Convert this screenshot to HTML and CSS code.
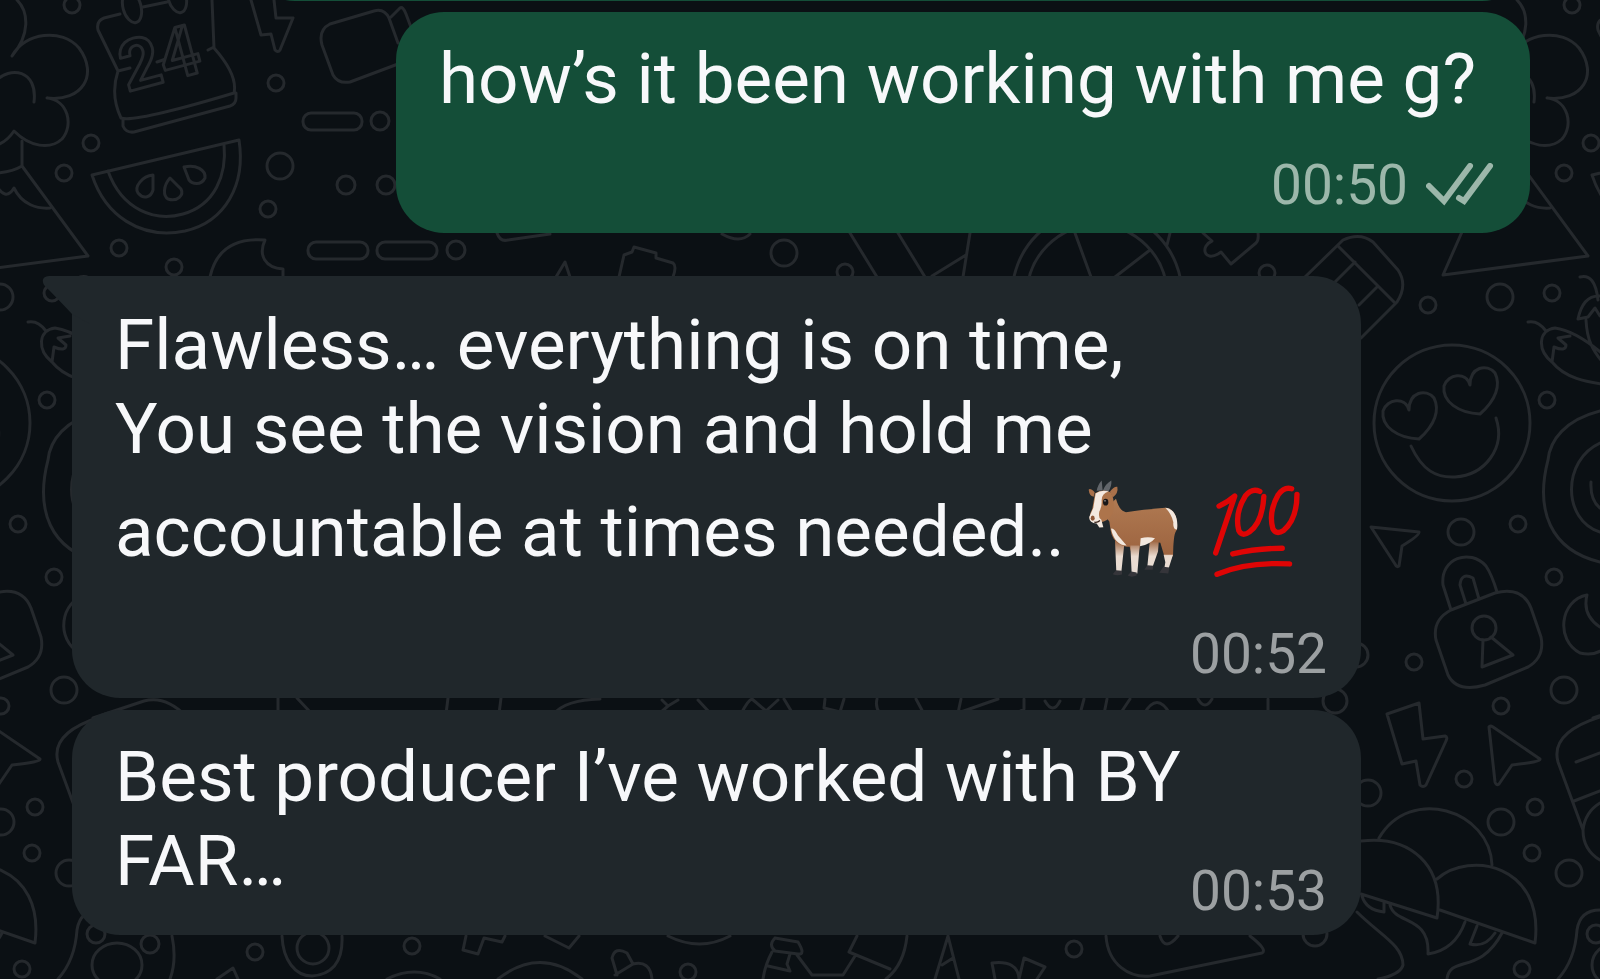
FILE: index.html
```html
<!DOCTYPE html>
<html lang="en">
<head>
<meta charset="utf-8">
<meta name="viewport" content="width=device-width, initial-scale=1">
<title>Chat</title>
<link rel="stylesheet" href="styles.css">
</head>
<body>
<svg class="wallpaper" viewBox="0 0 1600 979" preserveAspectRatio="xMidYMin slice" aria-hidden="true">
  <defs>
    <g id="tile">
      <!-- tree and sail -->
      <path d="M17 0C29 12 30 35 12 56C25 32 62 28 79 48C99 75 82 102 47 98C68 100 74 125 62 139C50 150 30 147 14 131C8 140 0 145-8 146M-5 82C10 65 38 70 34 102"/>
      <path d="M22 141V166C12 172 0 173-8 173M22 166L88 256L-57 275L-35 225M-4 185C2 195 8 198 14 188C22 205 38 209 50 208"/>
      <!-- calendar -->
      <path d="M120 14L104 18Q96 21 98 30L118 71Q110 95 121 118Q134 123 234 93Q238 75 214 48L212 0M123 120V126Q126 133 134 132L230 106Q236 104 236 98V93M118 71L130 68M157 62L166 59M208 50L214 47M143 7L167 2"/>
      <ellipse cx="132" cy="7" rx="9" ry="16" transform="rotate(-15 132 7)"/>
      <ellipse cx="177" cy="-3" rx="9" ry="16" transform="rotate(-15 177 -3)"/>
      <text class="date" x="127" y="92" transform="rotate(-15 127 92)">24</text>
      <!-- melon slice -->
      <path d="M92 175L239 140C246 185 225 222 185 231C140 240 105 215 92 175ZM108 171C122 210 155 222 183 214C215 205 227 175 224 144"/>
      <path d="M153 175C142 176 134 187 138 193C144 200 151 197 153 190ZM170 178C163 186 163 196 168 199C178 202 184 195 181 189ZM184 167C196 164 206 170 205 178C201 186 192 184 189 180Z"/>
      <path d="M251 0L261 35L271 34L275 50Q278 53 280 50L293 18L276 18L274 0M330 24L374 11Q384 8 389 18L398 43M398 64L350 82Q338 84 333 75L322 45Q318 30 330 24M391 17L400 8Q403 6 406 14L412 30"/>
      <rect x="303" y="113" width="59" height="17" rx="8"/>
      <rect x="308" y="242" width="60" height="17" rx="8"/>
      <rect x="377" y="242" width="60" height="17" rx="8"/>
      <path d="M210 277C217 245 240 238 265 240C258 255 265 268 283 269V277"/>
      <!-- row between the first two messages -->
      <path d="M497 233Q500 242 508 240L550 234M556 277L565 262L570 277M619 277L624 255L632 252L634 247L656 253V258L673 263Q677 266 673 277M722 234Q740 244 750 234M850 233L877 277M898 233L925 277M970 233L963 277M966 255L932 276"/>
      <circle cx="1097" cy="295" r="85"/><circle cx="1097" cy="295" r="70"/>
      <path d="M1075 233L1091 277M1150 250L1115 277M1170 233L1167 245M1203 233L1212 241C1200 246 1204 262 1218 254L1221 252L1231 264L1256 243Q1259 240 1258 233M1305 277L1343 240Q1360 232 1373 242L1398 270Q1408 285 1397 302L1361 338M1338 246L1395 303M1355 262L1335 282M1378 286L1359 305"/>
      <!-- chillies -->
      <path d="M1528 322Q1538 320 1546 331M1552 362C1537 350 1538 330 1555 328C1570 330 1590 340 1620 370M1552 362C1565 378 1585 382 1610 385M1552 362L1554 347Q1566 352 1566 345L1558 338L1570 336M1580 277Q1595 273 1598 300M1578 319Q1583 295 1600 296M1578 319L1588 317L1595 308L1600 316M1586 320C1587 340 1592 350 1605 365"/>
      <!-- smiley -->
      <circle cx="1452" cy="423" r="78"/>
      <path id="heart" d="M1409 410C1405 396 1387 399 1383 411C1381 427 1398 438 1419 439C1435 425 1440 410 1434 398C1426 388 1409 392 1409 410Z"/>
      <use href="#heart" x="61" y="-25"/>
      <path d="M1411 446C1422 470 1436 478 1455 477C1485 475 1506 448 1496 418"/>
      <path d="M1371 527L1419 532Q1420 535 1402 546L1399 566Q1397 568 1395 564Z"/>
      <!-- padlock -->
      <path d="M1451 610L1443 585C1440 558 1470 548 1486 566Q1492 575 1497 592M1466 604L1460 585Q1461 572 1473 578L1479 599M1451 610L1495 593Q1522 586 1531 608L1541 637Q1545 657 1528 667L1485 685Q1457 693 1448 675L1436 640Q1432 620 1451 610M1483 640L1482 667L1513 655L1491 637"/>
      <circle cx="1484" cy="628" r="12"/>
      <path d="M1587 595C1560 600 1555 640 1580 653Q1600 658 1612 640M1587 595Q1582 615 1600 627"/>
      <path d="M1600 411C1565 420 1550 440 1548 460C1535 510 1550 550 1600 562M1600 443C1562 460 1562 520 1600 532M1591 482Q1590 500 1600 508"/>
      <path d="M1387 714L1419 703L1423 739L1445 736Q1448 737 1446 741L1426 785Q1423 788 1420 785L1416 761L1402 764ZM1489 727Q1490 725 1493 727L1540 759Q1541 762 1512 765L1499 784Q1496 786 1495 782Z"/>
      <!-- umbrellas -->
      <path d="M1379 838C1410 785 1490 810 1492 865M1361 841C1410 835 1445 865 1437 918L1361 894M1437 879C1470 850 1545 865 1535 943L1440 910M1362 896Q1366 910 1384 912V903M1390 905C1395 925 1430 915 1428 954Q1455 950 1465 922M1477 926L1470 944Q1485 948 1495 933M1502 933C1480 975 1450 955 1447 979M1357 912C1380 935 1403 945 1403 965Q1400 975 1378 979"/>
      <path d="M1600 717Q1550 733 1558 762L1583 830Q1583 850 1600 860M1600 753L1576 762M1600 791L1574 801M1600 803Q1585 812 1583 830M1600 910Q1580 910 1577 930Q1575 960 1558 979"/>
      <!-- row between the last two messages -->
      <path d="M93 718L144 701Q165 695 186 716M278 698V714M297 698L312 714M448 698L446 714M501 698L499 714M554 714Q565 700 600 699M662 700L668 706L678 700M668 706L660 713M698 700L711 714M741 714Q748 700 752 699L766 711L778 700M784 699L793 714M825 699L824 708L840 712L844 699M877 699Q875 707 880 714M916 699L924 714M961 699L958 713L998 699M1024 699V709L1015 714M1045 701Q1053 715 1060 701M1084 699L1080 714M1107 699L1104 714M1130 699L1120 714M1144 714Q1157 691 1170 714M1198 699Q1205 711 1212 699M1268 699V714"/>
      <!-- bottom row -->
      <ellipse cx="117" cy="965" rx="25" ry="22"/>
      <circle cx="313" cy="948" r="16"/>
      <path d="M172 936Q177 960 170 979M217 979L233 968L238 979M282 936C283 960 295 976 312 976C335 974 343 958 342 936M387 979Q415 965 440 979M466 936L463 950L478 954L484 938L502 942L505 936M545 936L569 948L579 936M498 979Q540 946 582 979M617 975L612 958Q615 946 627 953L633 964Q650 960 652 979M633 964L615 975M668 936Q700 952 730 936"/>
      <path d="M775 938L798 942Q806 955 798 954L775 951Q768 945 775 938M772 952Q765 965 763 979M790 954L787 964L790 971L768 966M797 955L812 975H843L855 956M857 936L849 952L890 969M907 936Q904 965 886 979M948 936L935 979M948 936L959 979M953 958L942 965M995 979L992 963Q1018 960 1019 979L1024 958L1045 967L1037 979M1106 936C1108 965 1130 978 1150 976L1262 953Q1268 950 1250 936M1160 936Q1165 952 1178 936"/>
      <!-- dots -->
      <g id="dots">
        <circle cx="72" cy="5" r="8"/><circle cx="91" cy="143" r="8"/><circle cx="64" cy="173" r="8"/><circle cx="119" cy="248" r="8"/><circle cx="174" cy="267" r="8"/><circle cx="276" cy="83" r="8"/><circle cx="280" cy="166" r="13"/><circle cx="268" cy="209" r="8"/><circle cx="380" cy="121" r="9"/><circle cx="346" cy="185" r="9"/><circle cx="386" cy="185" r="9"/><circle cx="456" cy="250" r="9"/><circle cx="784" cy="253" r="13"/><circle cx="845" cy="272" r="8"/><circle cx="1267" cy="273" r="8"/>
        <circle cx="1500" cy="297" r="13"/><circle cx="1552" cy="293" r="8"/><circle cx="1428" cy="305" r="8"/><circle cx="1547" cy="400" r="8"/><circle cx="1461" cy="532" r="13"/><circle cx="1518" cy="524" r="8"/><circle cx="1554" cy="577" r="8"/><circle cx="1414" cy="662" r="8"/><circle cx="1501" cy="706" r="8"/><circle cx="1564" cy="690" r="13"/><circle cx="1464" cy="779" r="8"/><circle cx="1368" cy="793" r="13"/><circle cx="1501" cy="822" r="13"/><circle cx="1535" cy="807" r="8"/><circle cx="1532" cy="853" r="8"/><circle cx="1569" cy="873" r="13"/><circle cx="1522" cy="969" r="8"/>
        <circle cx="96" cy="934" r="9"/><circle cx="150" cy="944" r="9"/><circle cx="255" cy="952" r="8"/><circle cx="412" cy="946" r="8"/><circle cx="688" cy="972" r="8"/><circle cx="1074" cy="949" r="8"/><circle cx="1315" cy="934" r="12"/><circle cx="1356" cy="655" r="12"/><circle cx="1335" cy="701" r="12"/>
      </g>
    </g>
  </defs>
  <use href="#tile"/>
  <use href="#tile" x="-1500"/>
  <use href="#tile" x="1500"/>
</svg>

<main class="chat">
  <div class="bubble sent earlier"></div>

  <article class="bubble sent">
    <p class="text">how’s it been working with me g?</p>
    <footer class="meta">
      <time>00:50</time>
      <svg class="ticks" viewBox="0 0 68 44" role="img" aria-label="Delivered"><path d="M3 23L18 38L44 3M33 35L38 38L64 3"/></svg>
    </footer>
  </article>

  <article class="bubble received tailed">
    <svg class="tail" viewBox="0 0 48 48" aria-hidden="true"><path d="M48 0H7Q-2 1 2 9Q14 21 30 38L48 48Z"/></svg>
    <p class="text">Flawless… everything is on time,<br>You see the vision and hold me accountable at times needed..
      <svg class="emoji goat" viewBox="80 55 288 305" role="img" aria-label="Goat">
        <defs>
          <linearGradient id="coat" x1="0" x2="0" y1="0" y2="1"><stop offset="0" stop-color="#b07a52"/><stop offset="1" stop-color="#9c633f"/></linearGradient>
          <linearGradient id="leg" gradientUnits="userSpaceOnUse" x1="0" x2="0" y1="245" y2="340"><stop offset="0" stop-color="#9c6440"/><stop offset=".5" stop-color="#eadbd0"/><stop offset="1" stop-color="#e8ddd4"/></linearGradient>
        </defs>
        <path fill="#62666b" d="M112 96Q115 78 127 65L130 95ZM131 94Q138 76 156 65Q158 82 147 98Z"/>
        <path fill="url(#leg)" d="M167 245H196L186 340H171ZM272 240H299L296 278L280 324H264Z"/>
        <path fill="url(#coat)" d="M170 120C176 142 184 156 200 160C235 154 275 151 318 147C342 148 356 172 353 212C344 224 344 240 342 262L341 292L315 292L303 252C282 246 262 252 242 258L239 276H214L211 264C188 264 160 252 154 215L150 188L128 160Z"/>
        <path fill="url(#leg)" d="M213 260H241L234 344H217ZM313 288L341 288L328 328H315L318 310Z"/>
        <path fill="#f2e8df" d="M318 147C345 149 358 178 353 212Q340 212 342 190Q336 164 318 147ZM155 210Q163 205 176 230L202 260Q166 260 155 210ZM244 238Q266 232 287 238Q274 255 242 262Z"/>
        <path fill="#35353a" d="M160 346L170 334L188 336V347Q172 352 160 346ZM205 350L216 338L232 341V350Q217 357 205 350ZM255 333L264 319L282 321L280 333ZM300 342L312 324L330 326L327 344Z"/>
        <path fill="#a8704a" d="M106 100Q92 86 88 93Q90 112 103 114ZM152 98Q164 82 174 84Q178 104 160 116Z"/>
        <path fill="#ad744b" d="M107 103Q130 88 154 100Q169 125 160 164Q146 188 122 191Q98 190 91 180Q89 168 99 150Z"/>
        <path fill="#f3e8df" d="M109 104Q125 92 148 98Q126 104 127 126Q128 144 120 158Q116 178 126 183L132 205L120 206L112 194Q88 192 90 174L102 147Z"/>
        <ellipse cx="139" cy="130" rx="8" ry="10" fill="#191718"/><circle cx="137" cy="126" r="2" fill="#fff"/>
        <ellipse cx="100" cy="178" rx="6" ry="8" fill="#8e5738"/><path d="M105 190Q114 192 122 185" fill="none" stroke="#38221a" stroke-width="4"/>
      </svg>
      <svg class="emoji hundred" viewBox="455 65 275 290" role="img" aria-label="Hundred points">
        <path d="M479 137Q507 124 526 107Q498 190 469 277"/>
        <path d="M601 93Q578 82 558 106Q525 158 538 210Q548 230 570 214Q608 187 613 108"/>
        <path d="M696 85Q674 78 656 103Q626 155 640 205Q650 224 672 210Q712 176 712 102"/>
        <path d="M520 280Q592 263 668 263M473 341Q560 303 690 310"/>
      </svg></p>
    <footer class="meta"><time>00:52</time></footer>
  </article>

  <article class="bubble received compact">
    <p class="text">Best producer I’ve worked with BY FAR…</p>
    <footer class="meta"><time>00:53</time></footer>
  </article>
</main>
</body>
</html>
```
FILE: styles.css
```css
* { box-sizing: border-box; }

body {
  margin: 0;
  min-height: 100vh;
  position: relative;
  overflow-x: hidden;
  background: #0b1014;
  font-family: Roboto, "Liberation Sans", sans-serif;
}

.wallpaper {
  position: absolute;
  inset: 0;
  width: 100%;
  height: 100%;
  fill: none;
  stroke: #25292d;
  stroke-width: 3;
  stroke-linejoin: round;
  stroke-linecap: round;
}

.date {
  font: 700 70px Roboto, sans-serif;
  fill: #0b1014;
}

.chat {
  position: relative;
  display: flex;
  flex-direction: column;
  padding: 0 70px 0 72px;
  overflow: hidden;
}

.bubble {
  position: relative;
  display: flex;
  flex-direction: column;
  padding: 25px 34px 12px 43px;
  border-radius: 48px;
}

.sent {
  align-self: flex-end;
  margin-bottom: 43px;
  background: #144e38;
  padding-right: 36px;
  padding-bottom: 16px;
}

.sent .text { padding-right: 18px; }

.earlier {
  width: 88%;
  height: 96px;
  margin: -95px 0 11px;
  padding: 0;
}

.received {
  width: 100%;
  max-width: 1289px;
  margin-bottom: 12px;
  background: #20272b;
}

.tailed {
  padding-top: 27px;
  border-top-left-radius: 0;
}

.tail {
  position: absolute;
  top: 0;
  left: -30px;
  width: 48px;
  height: 48px;
  fill: #20272b;
}

.text {
  margin: 0;
  color: #f7f8fa;
  font-size: 71px;
  line-height: 84px;
}

.meta {
  display: flex;
  align-items: center;
  justify-content: flex-end;
  gap: 18px;
  margin-top: 32px;
  color: #9ca0a2;
  font-size: 55px;
  line-height: 64px;
}

.sent .meta { color: #9cb7aa; }

.ticks {
  width: 68px;
  height: 44px;
  fill: none;
  stroke: currentColor;
  stroke-width: 6;
  stroke-linecap: round;
}

.emoji {
  margin-top: 6px;
  margin-bottom: 11px;
  vertical-align: -34px;
}

.goat { width: 96px; height: 102px; margin-left: 4px; }

.hundred {
  width: 92px;
  height: 97px;
  margin-left: 11px;
  fill: none;
  stroke: #df0505;
  stroke-width: 16;
  stroke-linecap: round;
  stroke-linejoin: round;
}

.compact {
  display: grid;
  grid-template-columns: 1fr;
}

.compact .text,
.compact .meta { grid-area: 1 / 1; }

.compact .text { padding-bottom: 20px; }

.compact .meta {
  align-self: end;
  margin-top: 0;
}
```
